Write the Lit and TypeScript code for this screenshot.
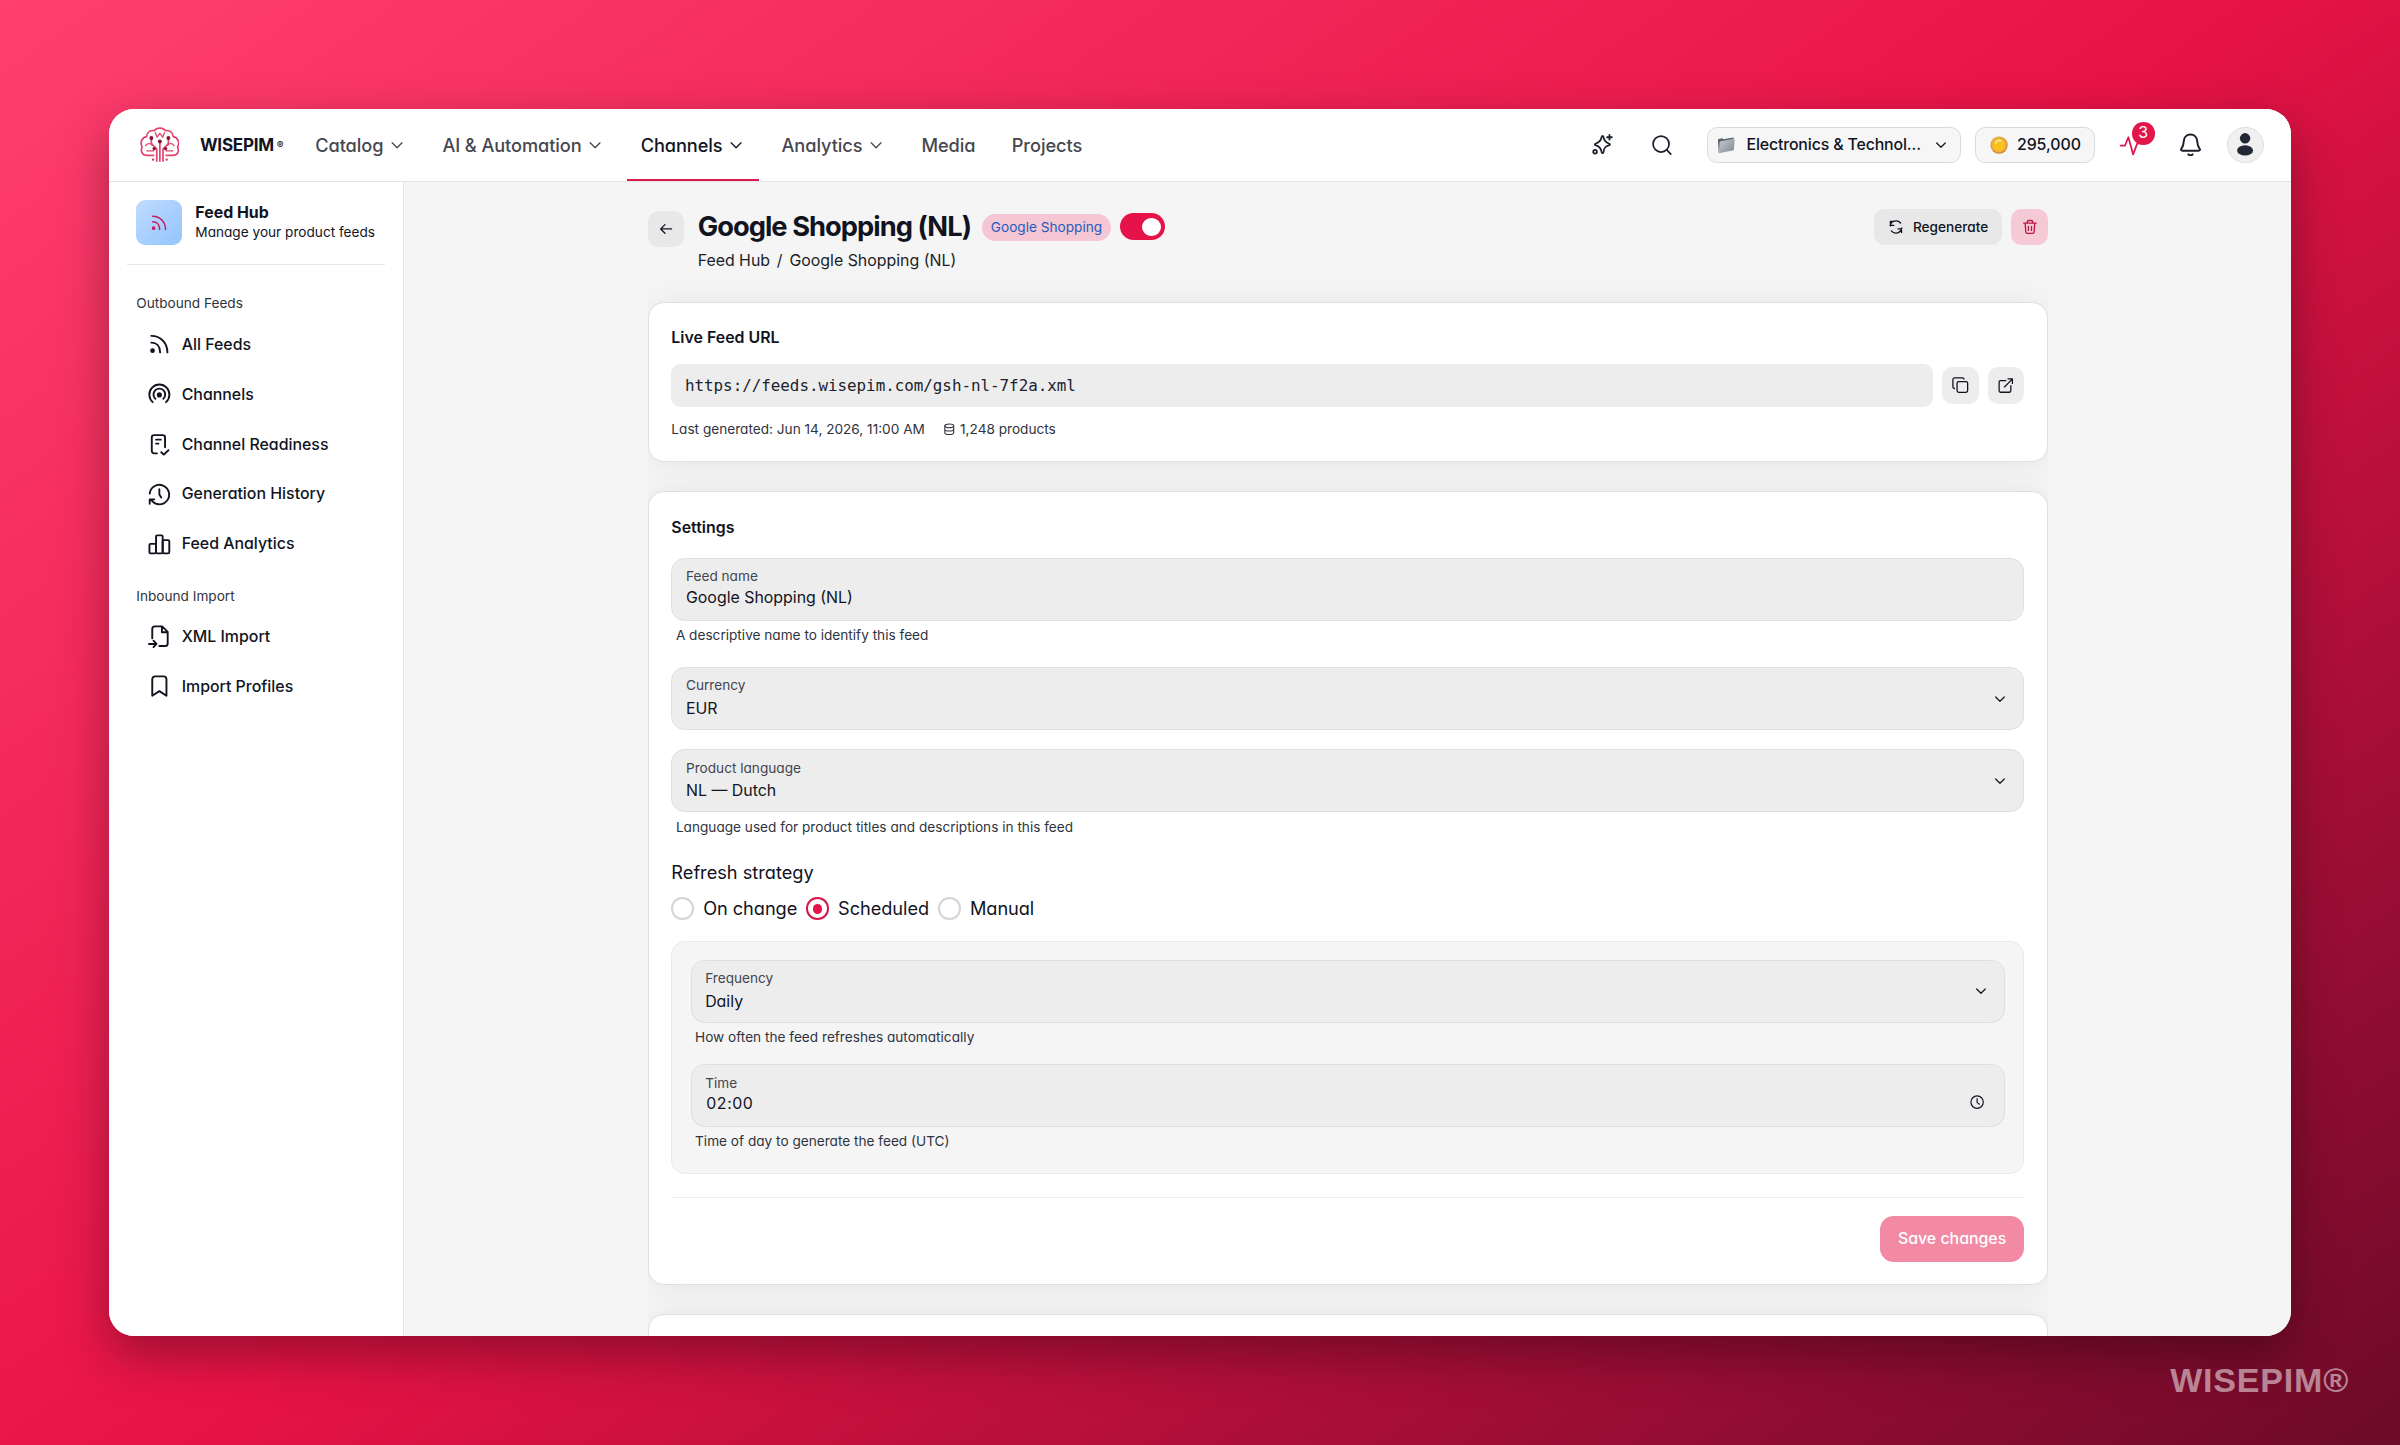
import { LitElement, html, css, svg, nothing, TemplateResult, SVGTemplateResult } from "lit";
import { customElement, property, state } from "lit/decorators.js";

const ICONS: Record<string, SVGTemplateResult> = {
  chevron: svg`<path d="M5.5 9l6.5 6.5L18.5 9"/>`,
  sparkles: svg`<path d="M11.2 4.4c.6-1.7 1.6-1.7 2 0 .8 4 1.9 5.5 5.6 6.7 1.7.6 1.7 1.4 0 2-3.900 1.100-5 2.700-5.600 6.900-.5 1.700-1.500 1.700-2 0-.8-4.200-2.100-5.700-6-6.900-1.600-.6-1.600-1.400 0-2 3.900-1.200 5.200-2.700 6-6.700z"/><path d="M19.500 2v5M17 4.500h5"/><circle cx="4.300" cy="19.800" r="1.900"/>`,
  search: svg`<circle cx="11.200" cy="11.200" r="8.900"/><path d="M17.800 18L22 22.300"/>`,
  pulse: svg`<path d="M1.500 13h4.300L9 5l4.600 16.500L17.500 11h4"/>`,
  bell: svg`<path d="M12 2.500c-3.800 0-6.200 2.800-6.400 6.200-.2 3.600-.7 5.300-2.300 7.200-.9 1.200-.3 2.100 1 2.100h15.400c1.300 0 1.900-.9 1-2.100-1.600-1.900-2.100-3.600-2.300-7.200-.2-3.400-2.600-6.200-6.400-6.200z"/><path d="M10 21.500c1 .9 3 .9 4 0"/>`,
  rss: svg`<path d="M3.500 3c9.700 0 17 7.300 17 17.500M3.500 10.200c5.500 0 9.300 3.900 9.300 10.300"/><circle cx="4.800" cy="18.700" r="1.500" fill="currentColor"/>`,
  broadcast: svg`<path d="M5 20.200a10.600 10.600 0 1 1 14 0"/><path d="M7.800 16.700a6.200 6.200 0 1 1 8.400 0"/><circle cx="12" cy="12.600" r="1.700" fill="currentColor"/>`,
  checklist: svg`<path d="M9.500 21.500H6.500a2.500 2.500 0 0 1-2.500-2.500V4.700A2.500 2.500 0 0 1 6.500 2.200h9A2.500 2.500 0 0 1 18 4.700V15M8.500 7h5M8.500 11.200h2.500M14 20.300l2.600 2.500 5-4.600"/>`,
  history: svg`<path d="M1.800 11.200A10.300 10.300 0 1 1 3.800 18.400M12 6.500v5.700l2 3.200M1.800 22v-4.700h4.900"/>`,
  chart: svg`<rect x="1.500" y="11.500" width="7" height="10" rx="1.200"/><rect x="8.500" y="2.500" width="7" height="19" rx="1.200"/><rect x="15.500" y="7.500" width="7" height="14" rx="1.200"/>`,
  fileImport: svg`<path d="M4.500 14V4.200A2.700 2.700 0 0 1 7.200 1.500H15l5.800 5.800v12.200a2.700 2.700 0 0 1-2.700 2.700H12M14.700 1.800V7.600h5.800M1 20h7.500M5.800 16.600L9 20l-3.200 3.400"/>`,
  bookmark: svg`<path d="M4.500 22V4.500a3 3 0 0 1 3-3h9a3 3 0 0 1 3 3V22L12 17z"/>`,
  back: svg`<path d="M4.500 12h16M10.500 5.500L4 12l6.500 6.500"/>`,
  refresh: svg`<path d="M20.800 13.500A9 9 0 0 1 5 18M3.200 10.500A9 9 0 0 1 19 6M9 3.500H3.700M3.500 4l.3 5.500h5M20.500 20.500l-.3-5.500h-5"/>`,
  trash: svg`<path d="M2.500 6.200h19M4.800 6.200l.9 13a2.700 2.700 0 0 0 2.700 2.500h7.200a2.700 2.700 0 0 0 2.700-2.500l.9-13M8 6V4.200A1.900 1.900 0 0 1 9.900 2.300h4.200A1.900 1.900 0 0 1 16 4.200V6M9.700 11v6.200M14.300 11v6.200"/>`,
  copy: svg`<rect x="8" y="7.500" width="14" height="14" rx="2.200"/><path d="M4.500 16.500A2.200 2.200 0 0 1 2.500 14.300V4.700A2.200 2.200 0 0 1 4.700 2.500h10.500a2.200 2.200 0 0 1 2 1.500"/>`,
  external: svg`<path d="M12.500 5H5A2 2 0 0 0 3 7v12.500a2 2 0 0 0 2 2h12.500a2 2 0 0 0 2-2V12M10.500 14L21.500 3M15.500 2.500h6.200V9"/>`,
  database: svg`<ellipse cx="12" cy="5.500" rx="8.500" ry="3.500"/><path d="M3.500 5.500v13c0 1.900 3.800 3.500 8.500 3.500s8.500-1.600 8.500-3.500v-13M3.500 12c0 1.900 3.800 3.500 8.500 3.500s8.500-1.600 8.500-3.500"/>`,
  clock: svg`<circle cx="12" cy="12" r="10.500"/><path d="M12 6v6.500l3.800 3"/>`,
};

const icon = (name: string, size: number, stroke = 1.8, cls = "") => html`<svg
  class=${"icon " + cls} width=${size} height=${size} viewBox="0 0 24 24" fill="none"
  stroke="currentColor" stroke-width=${stroke} stroke-linecap="round" stroke-linejoin="round">${ICONS[name]}</svg>`;

const base = css`
  *, :host { box-sizing: border-box; }
  .icon { display: block; flex: none; overflow: visible; }
`;

@customElement("brand-mark")
class BrandMark extends LitElement {
  static styles = css`:host { display: block; } svg { display: block; }`;
  render() {
    return html`<svg width="35" height="31" viewBox="0 0 70 62" fill="none" stroke="#e0456f" stroke-width="3" stroke-linecap="round" stroke-linejoin="round">
      <path d="M24 50H12C4 50 0 42 4 35.500C-1 27 4 18 11.500 17C12 9 19 5 25 6.500C29 0.500 41 0.500 45 6.500C51 5 58 9 58.500 17C66 18 71 27 66 35.500C70 42 66 50 58 50H46"/>
      <path d="M27 10l3.200 8 4.800-7 4.800 7L43 10" stroke-width="2.300"/>
      <path d="M35 26v34M29.500 60V39L20 29v-8M40.500 60V39L50 29v-8"/>
      <path d="M10 33c2-5 9-5 11-1M12 42h12V38M60 33c-2-5-9-5-11-1M58 42H46V38" stroke-width="2.300"/>
      <g fill="#7d1638" stroke="none"><circle cx="20" cy="19.500" r="3.500"/><circle cx="50" cy="19.500" r="3.500"/><circle cx="35" cy="25.500" r="3.500"/><circle cx="25" cy="38" r="3"/><circle cx="45" cy="38" r="3"/></g>
      <g fill="#dc2c5c" stroke="none"><circle cx="23" cy="57.500" r="2"/><circle cx="47" cy="57.500" r="2"/></g>
    </svg>`;
  }
}

@customElement("top-bar")
class TopBar extends LitElement {
  @property() active = "Channels";
  static styles = [base, css`
    :host { display: flex; align-items: center; height: 64px; background: #fff; border-bottom: 1px solid #e4e4e6; padding: 0 24px 0 27px; color: #11141f; }
    .brand { display: flex; align-items: center; width: 142.500px; }
    .name { margin-left: 18px; font-size: 15px; font-weight: 700; letter-spacing: -.2px; }
    .reg { font-size: 9px; font-weight: 700; margin-left: 2.500px; }
    nav { display: flex; gap: 8px; align-self: stretch; }
    .tab { display: flex; align-items: center; gap: 4px; padding: 2px 12px 0; font-size: 16px; font-weight: 500; letter-spacing: -.06px; color: #46474f; border-bottom: 2px solid transparent; white-space: nowrap; }
    .tab.on { color: #11141f; border-color: #d91a4c; }
    .tools { margin-left: auto; display: flex; align-items: center; gap: 12px; }
    .tool { width: 40px; height: 40px; display: grid; place-items: center; position: relative; color: #1b1f2c; }
    .alert { color: #e2164a; }
    .badge { position: absolute; left: 20px; top: 0; width: 20px; height: 20px; border-radius: 50%; background: #e2164a; color: #fff; font-size: 14px; line-height: 20px; text-align: center; }
    .pill { display: flex; align-items: center; height: 32px; border: 1px solid #d9d9db; border-radius: 9px; background: #f6f6f6; font-size: 14px; font-weight: 500; white-space: nowrap; }
    .space { width: 224px; margin-left: 8px; padding: 0 12.500px 0 8px; gap: 10px; }
    .space span { flex: none; width: 158px; font-weight: 450; letter-spacing: -.13px; }
    .space .icon { margin-left: -4px; }
    .coins { width: 106px; padding-left: 12.500px; gap: 7.500px; letter-spacing: -.05px; }
    .avatar { width: 32px; height: 32px; border-radius: 50%; border: 1px solid #dfdfe1; background: #f0f0f1; display: grid; place-items: center; }
    .avatar svg, .pill svg { display: block; flex: none; }
  `];
  private tab(label: string, menu = true) {
    return html`<div class="tab ${label === this.active ? "on" : ""}">${label}${menu ? icon("chevron", 16, 1.7) : nothing}</div>`;
  }
  render() {
    return html`
      <div class="brand"><brand-mark></brand-mark><span class="name">WISEPIM</span><span class="reg">®</span></div>
      <nav>
        ${this.tab("Catalog")}${this.tab("AI & Automation")}${this.tab("Channels")}${this.tab("Analytics")}
        ${this.tab("Media", false)}${this.tab("Projects", false)}
      </nav>
      <div class="tools">
        <div class="tool">${icon("sparkles", 20, 1.9)}</div>
        <div class="tool">${icon("search", 19, 1.9)}</div>
        <div class="pill space">
          <svg width="16" height="16" viewBox="0 0 16 16"><defs><linearGradient id="f" x1="0" y1="0" x2="1" y2="1"><stop offset="0" stop-color="#c9ced6"/><stop offset="1" stop-color="#7f858f"/></linearGradient></defs>
            <path d="M.8 2.800L4.500 2l1.200.9 8.800-1.600v10L1.500 14.800z" fill="#59606b"/><path d="M2.400 4.800L15.600 2.100l-.8 10.400L1.500 15.200z" fill="url(#f)"/></svg>
          <span>Electronics &amp; Technol...</span>${icon("chevron", 14, 1.8)}
        </div>
        <div class="pill coins">
          <svg width="16" height="16" viewBox="0 0 16 16"><circle cx="8" cy="8" r="7.600" fill="#c98a2b"/><circle cx="7.800" cy="7.700" r="6.800" fill="#f0b33a"/><circle cx="7.800" cy="7.800" r="4.800" fill="#fbc21d"/><path d="M4.800 6.200c1-2 3-2.800 4.800-2" stroke="#ffe9a0" stroke-width="1.400" fill="none" stroke-linecap="round"/></svg>
          295,000
        </div>
        <div class="tool alert">${icon("pulse", 22, 1.7)}<span class="badge">3</span></div>
        <div class="tool">${icon("bell", 22, 1.9)}</div>
        <div class="avatar"><svg width="16" height="20" viewBox="0 0 16 20" fill="#222736"><circle cx="8" cy="4.700" r="4.600"/><ellipse cx="8" cy="15.300" rx="7" ry="4.600"/></svg></div>
      </div>`;
  }
}

@customElement("side-bar")
class SideBar extends LitElement {
  static styles = [base, css`
    :host { display: flex; flex-direction: column; width: 260px; flex: none; background: #fff; border-right: 1px solid #e6e6e8; padding: 16px 16px 0; color: #11141f; }
    .head { display: flex; align-items: center; gap: 12px; padding: 0 8px 16px; border-bottom: 1px solid #e6e6e8; margin-bottom: 26px; }
    .tile { width: 40px; height: 40px; border-radius: 8px; background: linear-gradient(135deg, #bfdbfe, #93c5fd); display: grid; place-items: center; color: #c91c5c; }
    .title { font-size: 14px; font-weight: 700; line-height: 18px; }
    .sub { font-size: 12px; line-height: 17px; white-space: nowrap; }
    .label { font-size: 12px; line-height: 16px; padding-left: 8px; margin-bottom: 8px; color: #30333d; }
    .group { display: flex; flex-direction: column; gap: 4px; margin: 0 8px 17.500px; }
    .item { display: flex; align-items: center; gap: 10px; height: 40px; padding: 0 10px; font-size: 14px; font-weight: 500; }
  `];
  private items(rows: [string, string][]) {
    return html`<div class="group">${rows.map(([i, t]) => html`<div class="item">${icon(i, 20, 2)}${t}</div>`)}</div>`;
  }
  render() {
    return html`
      <div class="head"><div class="tile">${icon("rss", 16, 1.9)}</div>
        <div><div class="title">Feed Hub</div><div class="sub">Manage your product feeds</div></div></div>
      <div class="label">Outbound Feeds</div>
      ${this.items([["rss", "All Feeds"], ["broadcast", "Channels"], ["checklist", "Channel Readiness"], ["history", "Generation History"], ["chart", "Feed Analytics"]])}
      <div class="label">Inbound Import</div>
      ${this.items([["fileImport", "XML Import"], ["bookmark", "Import Profiles"]])}`;
  }
}

@customElement("form-field")
class FormField extends LitElement {
  @property() label = "";
  @property() value = "";
  @property() hint = "";
  @property() kind = "text";
  static styles = [base, css`
    :host { display: block; }
    .box { display: flex; align-items: center; justify-content: space-between; height: 55.500px; border: 1px solid #dfdfe0; border-radius: 12px; background: #ededed; padding: 0 13.500px 0 12px; }
    .label { font-size: 12px; line-height: 16px; color: #42454f; }
    .value { font-size: 14px; line-height: 20px; margin-top: 3px; color: #11141f; }
    .text .value { margin: 2px 0 2px; }
    .time .value { letter-spacing: .5px; padding-left: 1px; margin: 1px 0 2px; }
    .time .icon { margin: 11px 3.500px 0 0; }
    .hint { font-size: 12px; line-height: 16px; padding: 4.500px 4px 0; color: #30333d; }
  `];
  render() {
    return html`<div class="box ${this.kind}">
        <div><div class="label">${this.label}</div><div class="value">${this.value}</div></div>
        ${this.kind === "select" ? icon("chevron", 14, 1.8) : this.kind === "time" ? icon("clock", 12.5, 2) : nothing}
      </div>
      ${this.hint ? html`<div class="hint">${this.hint}</div>` : nothing}`;
  }
}

@customElement("feed-page")
class FeedPage extends LitElement {
  @state() private strategy = "Scheduled";
  static styles = [base, css`
    :host { display: block; flex: 1; min-width: 0; background: #f5f5f5; padding: 24px 214px 0; color: #11141f; overflow: hidden; }
    .top { display: flex; justify-content: space-between; align-items: flex-start; height: 82px; }
    .lead { display: flex; gap: 12px; }
    .sq { width: 32px; height: 32px; border-radius: 9px; background: #e8e8e8; display: grid; place-items: center; }
    .lead .sq { margin-top: 1.500px; }
    .line { display: flex; align-items: center; height: 32px; }
    h1 { margin: 0; font-size: 24px; line-height: 32px; font-weight: 700; letter-spacing: -.84px; white-space: nowrap; }
    .chip { margin-left: 9.500px; height: 24px; border-radius: 12px; background: #f5c6d3; color: #1f5bbf; font-size: 12px; line-height: 23.500px; padding: 0 8px; white-space: nowrap; }
    .switch { margin-left: 7.500px; margin-top: -1px; width: 40px; height: 24px; border-radius: 12px; background: #e5134a; padding: 4px; display: flex; justify-content: flex-end; }
    .knob { width: 16px; height: 16px; border-radius: 50%; background: #fff; }
    .crumbs { display: flex; gap: 6px; font-size: 14px; line-height: 20px; margin-top: 4px; color: #1b1e29; }
    .actions { display: flex; gap: 8px; }
    .regen { display: flex; align-items: center; justify-content: center; gap: 8px; width: 113px; height: 32px; border-radius: 9px; background: #e8e8e8; font-size: 12px; font-weight: 500; }
    .danger { background: #f6c9d7; color: #b8174a; }
    .stack { display: flex; flex-direction: column; gap: 25px; overflow-x: clip; overflow-y: visible; }
    .card { background: #fff; border: 1px solid #e0e0e1; border-radius: 14px; padding: 20px; box-shadow: 0 0 12px rgba(0,0,0,.02), 0 2px 30px rgba(0,0,0,.06); }
    .card.live { padding-top: 21px; }
    .card.settings { padding-top: 22.500px; }
    h2 { margin: 0; font-size: 14px; line-height: 20px; font-weight: 600; }
    .url { display: flex; align-items: center; gap: 8px; margin-top: 12.500px; }
    .code { flex: 1; height: 38px; border-radius: 8px; background: #ededed; padding: 0 12px; font: 14px/38px "DejaVu Sans Mono", "Liberation Mono", monospace; letter-spacing: -.03px; color: #20232d; }
    .url .sq { background: #ededed; }
    .meta { display: flex; align-items: center; gap: 16px; margin-top: 11.500px; font-size: 12px; line-height: 16px; color: #30333d; }
    .count { display: flex; align-items: center; gap: 4px; }
    .f1 { margin-top: 16px; } .f2 { margin-top: 20px; } .f3 { margin-top: 17px; }
    .h3 { font-size: 16px; line-height: 24px; margin-top: 20.700px; }
    .radios { display: flex; gap: 8px; margin-top: 7.500px; font-size: 16px; line-height: 24px; letter-spacing: -.04px; }
    .radio { display: flex; align-items: center; gap: 8px; }
    .ring { width: 20px; height: 20px; border-radius: 50%; border: 2px solid #d4d4d6; display: grid; place-items: center; }
    .ring.on { border-color: #d6174a; }
    .ring.on::after { content: ""; width: 8.500px; height: 8.500px; border-radius: 50%; background: #e5134a; }
    .panel { margin-top: 16px; border: 1px solid #e9e9ea; border-radius: 12px; background: #f5f5f5; padding: 16px; height: 205.600px; }
    .f5 { margin-top: 16px; }
    .foot { margin-top: 20px; border-top: 1px solid #ebebec; padding-top: 16px; display: flex; justify-content: flex-end; }
    .save { width: 126.500px; height: 40px; border-radius: 12px; background: #f28aa3; color: #fff; font-size: 14px; line-height: 40px; font-weight: 500; text-align: center; }
    .next { height: 160px; }
  `];
  private radio(name: string): TemplateResult {
    return html`<div class="radio" @click=${() => (this.strategy = name)}><span class="ring ${name === this.strategy ? "on" : ""}"></span>${name}</div>`;
  }
  render() {
    return html`
      <div class="top">
        <div class="lead">
          <div class="sq">${icon("back", 14, 1.9)}</div>
          <div>
            <div class="line"><h1>Google Shopping (NL)</h1><span class="chip">Google Shopping</span><span class="switch"><span class="knob"></span></span></div>
            <div class="crumbs"><span>Feed Hub</span><span>/</span><span>Google Shopping (NL)</span></div>
          </div>
        </div>
        <div class="actions">
          <div class="regen">${icon("refresh", 14, 2)}Regenerate</div>
          <div class="sq danger">${icon("trash", 14, 2)}</div>
        </div>
      </div>
      <div class="stack">
        <section class="card live">
          <h2>Live Feed URL</h2>
          <div class="url"><div class="code">https://feeds.wisepim.com/gsh-nl-7f2a.xml</div>
            <div class="sq">${icon("copy", 16, 1.7)}</div><div class="sq">${icon("external", 15, 1.8)}</div></div>
          <div class="meta"><span>Last generated: Jun 14, 2026, 11:00 AM</span><span class="count">${icon("database", 11, 2.1)}1,248 products</span></div>
        </section>
        <section class="card settings">
          <h2>Settings</h2>
          <form-field class="f1" label="Feed name" value="Google Shopping (NL)" hint="A descriptive name to identify this feed"></form-field>
          <form-field class="f2" kind="select" label="Currency" value="EUR"></form-field>
          <form-field class="f3" kind="select" label="Product language" value="NL — Dutch" hint="Language used for product titles and descriptions in this feed"></form-field>
          <div class="h3">Refresh strategy</div>
          <div class="radios">${["On change", "Scheduled", "Manual"].map((n) => this.radio(n))}</div>
          <div class="panel">
            <form-field kind="select" label="Frequency" value="Daily" hint="How often the feed refreshes automatically"></form-field>
            <form-field class="f5" kind="time" label="Time" value="02:00" hint="Time of day to generate the feed (UTC)"></form-field>
          </div>
          <div class="foot"><div class="save">Save changes</div></div>
        </section>
        <section class="card next"></section>
      </div>`;
  }
}

@customElement("app-root")
class AppRoot extends LitElement {
  static styles = css`
    :host { display: block; position: relative; width: 2400px; height: 1445px; padding: 109px; box-sizing: border-box; overflow: hidden;
      background: linear-gradient(145deg, #ff3f70 0%, #e81346 50%, #6c0a29 100%);
      font-family: Inter, "Liberation Sans", sans-serif; font-feature-settings: "cv11"; -webkit-font-smoothing: antialiased; }
    .window { zoom: 1.1364; width: 1920px; height: 1080px; display: flex; flex-direction: column; border-radius: 22px; overflow: hidden; background: #fff; box-shadow: 0 16px 44px rgba(0,0,0,.34); }
    .body { display: flex; flex: 1; min-height: 0; }
    .mark { position: absolute; right: 51px; bottom: 45px; font: 700 34px/40px "Liberation Sans", Arial, sans-serif; letter-spacing: .8px; color: rgba(255,255,255,.5); }
  `;
  render() {
    return html`<div class="window"><top-bar></top-bar><div class="body"><side-bar></side-bar><feed-page></feed-page></div></div>
      <div class="mark">WISEPIM®</div>`;
  }
}
